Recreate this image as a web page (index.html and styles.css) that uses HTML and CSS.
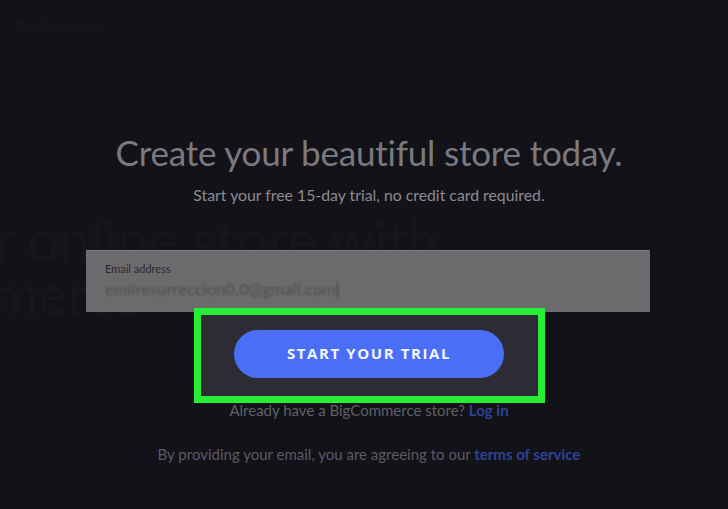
FILE: index.html
```html
<!DOCTYPE html>
<html lang="en">
<head>
<meta charset="utf-8">
<title>Create your beautiful store today</title>
<link rel="stylesheet" href="styles.css">
</head>
<body>
<div class="ghost" aria-hidden="true">
  <div class="ghost-logo">BigCommerce</div>
  <div class="ghost-line1">r online store with</div>
  <div class="ghost-line2">merce</div>
</div>
<main class="signup">
  <h1 class="title">Create your beautiful store today.</h1>
  <p class="subtitle">Start your free 15-day trial, no credit card required.</p>
  <div class="field">
    <span class="field-label">Email address</span>
    <span class="field-value">emilresurreccion0.0@gmail.com<span class="caret"></span></span>
  </div>
  <div class="highlight">
    <button class="cta">START YOUR TRIAL</button>
  </div>
  <p class="login">Already have a BigCommerce store? <a class="link" href="#">Log in</a></p>
  <p class="terms">By providing your email, you are agreeing to our <a class="link" href="#">terms of service</a></p>
</main>
</body>
</html>
```
FILE: styles.css
```css
html, body {
  margin: 0;
  padding: 0;
}
body {
  width: 728px;
  height: 509px;
  overflow: hidden;
  background: #131219;
  font-family: Lato, "Open Sans", sans-serif;
  position: relative;
}
.ghost {
  position: absolute;
  inset: 0;
  z-index: 0;
  color: #17161d;
  pointer-events: none;
}
.ghost-logo {
  position: absolute;
  left: 16px;
  top: 18px;
  font-size: 14px;
  font-weight: 700;
  color: #18171e;
}
.ghost-line1 {
  position: absolute;
  left: -6px;
  top: 210px;
  font-size: 56px;
  line-height: 60px;
  white-space: nowrap;
}
.ghost-line2 {
  position: absolute;
  left: -8px;
  top: 264px;
  font-size: 56px;
  line-height: 60px;
  white-space: nowrap;
}
.signup {
  position: relative;
  z-index: 1;
  display: flex;
  flex-direction: column;
  align-items: center;
  padding: 131px 0 0 10px;
}
.title {
  margin: 0;
  font-size: 35px;
  line-height: 42px;
  font-weight: 400;
  color: #7a7a7e;
  letter-spacing: -0.2px;
}
.subtitle {
  margin: 12px 0 0;
  font-size: 15.8px;
  line-height: 20px;
  color: #8b8b90;
}
.field {
  box-sizing: border-box;
  width: 564px;
  height: 62px;
  margin: 45px 0 0 -2px;
  padding: 11px 19px 0;
  background: #6b6b6d;
  border-top: 1px solid #7a7a80;
  display: flex;
  flex-direction: column;
  gap: 3px;
}
.field-label {
  font-size: 11px;
  line-height: 14px;
  color: #2a2a2f;
}
.field-value {
  font-size: 16px;
  line-height: 20px;
  letter-spacing: 0.3px;
  color: #4d4d52;
  filter: blur(0.8px);
  display: flex;
  align-items: center;
}
.caret {
  display: inline-block;
  width: 1px;
  height: 17px;
  background: #3a3a3f;
  margin-left: 1px;
}
.highlight {
  box-sizing: border-box;
  width: 351px;
  height: 95px;
  margin: -4px 0 0 0;
  border: 7px solid #27ee34;
  background: #2d2c35;
  display: flex;
  justify-content: center;
  padding-top: 15px;
}
.cta {
  width: 270px;
  height: 48px;
  border: none;
  border-radius: 24px;
  background: #4a6ff6;
  color: #f4f6ff;
  font-family: "Open Sans", Lato, sans-serif;
  font-weight: 700;
  font-size: 15px;
  letter-spacing: 1.6px;
  padding: 0 0 3px;
}
.login {
  margin: -1px 0 0;
  font-size: 15px;
  line-height: 16px;
  color: #5f5f66;
}
.terms {
  margin: 27px 0 0;
  font-size: 15px;
  line-height: 18px;
  color: #5a5a62;
}
.link {
  color: #2c4492;
  text-decoration: none;
  font-weight: 700;
}
```
